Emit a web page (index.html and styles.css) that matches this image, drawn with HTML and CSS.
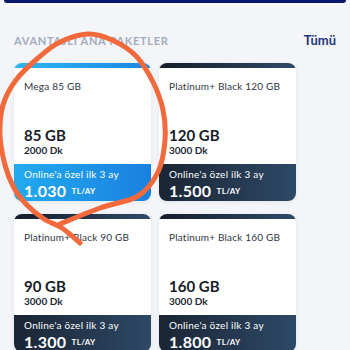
FILE: index.html
```html
<!DOCTYPE html>
<html lang="tr">
<head>
<meta charset="utf-8">
<title>Avantajlı Ana Paketler</title>
<link rel="stylesheet" href="styles.css">
</head>
<body>
<div class="topbar"></div>
<section class="section">
  <header class="section-head">
    <h2 class="section-title">AVANTAJLI ANA PAKETLER</h2>
    <a class="see-all" href="#">Tümü</a>
  </header>
  <div class="grid">
    <article class="card card-blue">
      <div class="stripe"></div>
      <div class="body">
        <div class="name">Mega 85 GB</div>
        <div class="specs">
          <div class="data">85 GB</div>
          <div class="mins">2000 Dk</div>
        </div>
      </div>
      <div class="panel">
        <div class="promo">Online'a özel ilk 3 ay</div>
        <div class="price">1.030 <sup class="unit">TL/AY</sup></div>
      </div>
    </article>
    <article class="card card-dark">
      <div class="stripe"></div>
      <div class="body">
        <div class="name">Platinum+ Black 120 GB</div>
        <div class="specs">
          <div class="data">120 GB</div>
          <div class="mins">3000 Dk</div>
        </div>
      </div>
      <div class="panel">
        <div class="promo">Online'a özel ilk 3 ay</div>
        <div class="price">1.500 <sup class="unit">TL/AY</sup></div>
      </div>
    </article>
    <article class="card card-dark">
      <div class="stripe"></div>
      <div class="body">
        <div class="name">Platinum+ Black 90 GB</div>
        <div class="specs">
          <div class="data">90 GB</div>
          <div class="mins">3000 Dk</div>
        </div>
      </div>
      <div class="panel">
        <div class="promo">Online'a özel ilk 3 ay</div>
        <div class="price">1.300 <sup class="unit">TL/AY</sup></div>
      </div>
    </article>
    <article class="card card-dark">
      <div class="stripe"></div>
      <div class="body">
        <div class="name">Platinum+ Black 160 GB</div>
        <div class="specs">
          <div class="data">160 GB</div>
          <div class="mins">3000 Dk</div>
        </div>
      </div>
      <div class="panel">
        <div class="promo">Online'a özel ilk 3 ay</div>
        <div class="price">1.800 <sup class="unit">TL/AY</sup></div>
      </div>
    </article>
  </div>
</section>
<svg class="scribble" width="350" height="350" viewBox="0 0 350 350" aria-hidden="true">
  <path d="M60 224 C66.7 221.3 87 212.7 100 208 C113 203.3 128.3 202 138 196 C147.7 190 153.5 181.3 158 172 C162.5 162.7 164.2 150.3 165 140 C165.8 129.7 165 119.7 163 110 C161 100.3 157.5 91 153 82 C148.5 73 142.8 63 136 56 C129.2 49 120 43.7 112 40 C104 36.3 96.7 33.7 88 34 C79.3 34.3 68.3 38 60 42 C51.7 46 45.3 51.7 38 58 C30.7 64.3 21.8 72.2 16 80 C10.2 87.8 5.7 95.8 3 105 C0.3 114.2 -0.3 125 0 135 C0.3 145 2.7 156.2 5 165 C7.3 173.8 10.3 181.3 14 188 C17.7 194.7 22 199.8 27 205 C32 210.2 38.2 215.2 44 219 C49.8 222.8 56 224 62 228 C68 232 77 240.5 80 243"/>
</svg>
</body>
</html>
```

FILE: styles.css
```css
* { box-sizing: border-box; }
html, body { margin: 0; padding: 0; }
body {
  width: 350px;
  height: 350px;
  overflow: hidden;
  background: #f3f5f8;
  font-family: "Lato", "Open Sans", sans-serif;
  color: #1c2230;
  position: relative;
}
.topbar {
  height: 3px;
  margin: 0 4px;
  background: #0b176c;
  border-radius: 0 0 6px 6px;
}
.section { padding: 0 14px; }
.section-head {
  display: flex;
  justify-content: space-between;
  align-items: center;
  height: 16px;
  margin: 29px 0 15px;
}
.section-title {
  margin: 0;
  font-size: 11px;
  font-weight: 700;
  letter-spacing: 0.7px;
  color: #a4acbf;
}
.see-all {
  font-size: 13px;
  font-weight: 700;
  color: #22357a;
  text-decoration: none;
}
.grid {
  display: grid;
  grid-template-columns: 137px 137px;
  column-gap: 8px;
  row-gap: 13px;
}
.card {
  height: 138px;
  background: #fff;
  border-radius: 8px;
  overflow: hidden;
  display: flex;
  flex-direction: column;
  box-shadow: 0 1px 4px rgba(30, 40, 70, 0.08);
}
.stripe { height: 5px; flex: none; }
.body {
  flex: 1;
  display: flex;
  flex-direction: column;
  justify-content: space-between;
  padding: 12px 10px 7px;
}
.name {
  font-size: 10px;
  line-height: 12px;
  letter-spacing: 0.2px;
  color: #2f3541;
}
.data {
  font-size: 15px;
  line-height: 16px;
  font-weight: 700;
  color: #171c27;
  margin-top: 1px;
}
.mins {
  font-size: 10px;
  line-height: 14px;
  font-weight: 700;
  color: #222834;
}
.panel {
  height: 37px;
  flex: none;
  padding: 4px 10px 0;
  color: #fff;
}
.promo {
  font-size: 10px;
  line-height: 13px;
  letter-spacing: 0.25px;
}
.price {
  font-size: 16px;
  line-height: 19px;
  font-weight: 700;
  letter-spacing: 0.3px;
}
.unit {
  font-size: 8px;
  font-weight: 700;
  vertical-align: top;
  position: relative;
  top: 1px;
  margin-left: 1px;
}
.card-blue .stripe { background: linear-gradient(90deg, #2ab6f0, #1d86e2); }
.card-blue .panel { background: linear-gradient(90deg, #22aaee, #1a80e0); }
.card-dark .stripe { background: linear-gradient(90deg, #151d2a, #2f4a68); }
.card-dark .panel { background: linear-gradient(90deg, #1a2535, #2d4966); }
.scribble {
  position: absolute;
  left: 0;
  top: 0;
  pointer-events: none;
}
.scribble path {
  fill: none;
  stroke: #f26a3c;
  stroke-width: 5;
  stroke-linecap: round;
  stroke-linejoin: round;
}
```
